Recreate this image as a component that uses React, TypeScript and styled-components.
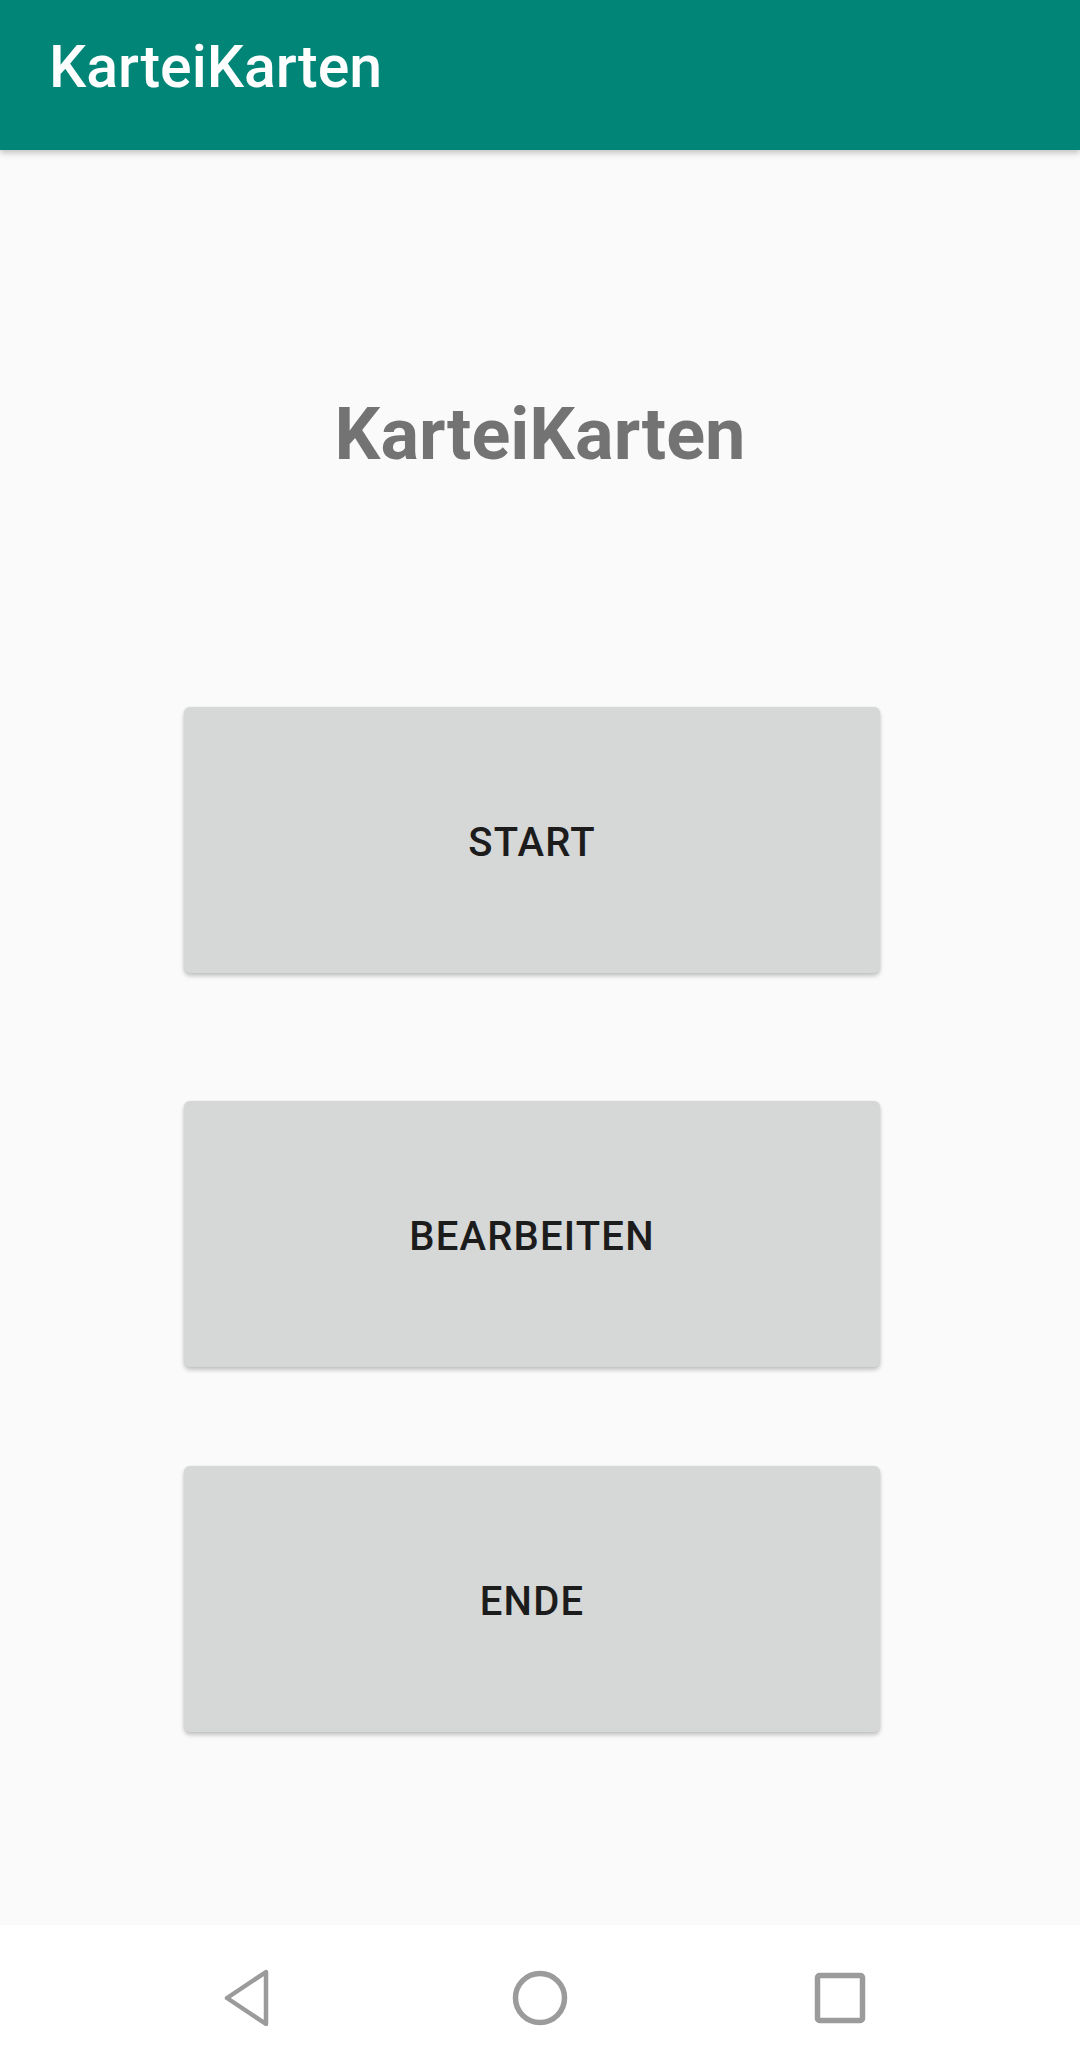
import React from "react";
import styled, { createGlobalStyle } from "styled-components";

const GlobalStyle = createGlobalStyle`
  html, body {
    margin: 0;
    padding: 0;
    background: #fafafa;
  }
  body {
    font-family: Roboto, "Noto Sans", "Liberation Sans", sans-serif;
  }
  * { box-sizing: border-box; }
`;

const Screen = styled.div`
  width: 1080px;
  height: 2070px;
  display: flex;
  flex-direction: column;
  background: #fafafa;
  overflow: hidden;
`;

const Toolbar = styled.header`
  position: relative;
  z-index: 2;
  height: 150px;
  flex: none;
  background: #008577;
  display: flex;
  align-items: center;
  padding-left: 49px;
  padding-bottom: 17px;
  box-shadow: 0 3px 6px rgba(0, 0, 0, 0.22);
`;

const ToolbarTitle = styled.h1`
  margin: 0;
  font-family: Roboto, sans-serif;
  font-weight: 500;
  font-size: 59px;
  line-height: 1;
  color: #ffffff;
  letter-spacing: 0;
`;

const Main = styled.main`
  flex: 1;
  display: flex;
  flex-direction: column;
  background: #fafafa;
`;

const Heading = styled.h2`
  margin: 249px 0 0 0;
  text-align: center;
  font-family: Roboto, sans-serif;
  font-weight: 700;
  font-size: 72px;
  line-height: 72px;
  color: #737373;
`;

const ButtonColumn = styled.div`
  display: flex;
  flex-direction: column;
  padding-left: 184px;
`;

const MenuButton = styled.button<{ $gap: number }>`
  margin-top: ${(p) => p.$gap}px;
  width: 696px;
  height: 266px;
  border: none;
  border-radius: 6px;
  background: #d6d7d7;
  box-shadow: 0 3px 4px rgba(0, 0, 0, 0.22), 0 0 2px rgba(0, 0, 0, 0.08);
  display: flex;
  align-items: center;
  justify-content: center;
  font-family: Roboto, sans-serif;
  font-weight: 500;
  font-size: 40px;
  letter-spacing: 0.03em;
  text-transform: uppercase;
  color: #1c1c1c;
  padding: 4px 0 0 0;
`;

const NavBar = styled.nav`
  height: 145px;
  flex: none;
  background: #ffffff;
  display: flex;
  align-items: center;
  justify-content: space-between;
  padding: 0 210px 0 216px;
`;

const NavIcon = styled.svg<{ $nudge?: number }>`
  width: 60px;
  height: 60px;
  display: block;
  margin-right: ${(p) => p.$nudge ?? 0}px;
`;

export default function App() {
  return (
    <>
      <GlobalStyle />
      <Screen>
        <Toolbar>
          <ToolbarTitle>KarteiKarten</ToolbarTitle>
        </Toolbar>
        <Main>
          <Heading>KarteiKarten</Heading>
          <ButtonColumn>
            <MenuButton $gap={236}>Start</MenuButton>
            <MenuButton $gap={128}>Bearbeiten</MenuButton>
            <MenuButton $gap={99}>Ende</MenuButton>
          </ButtonColumn>
        </Main>
        <NavBar>
          <NavIcon viewBox="0 0 60 60">
            <path
              d="M50 4 L50 56 L11 30 Z"
              fill="none"
              stroke="#9b9b9b"
              strokeWidth="4.5"
              strokeLinejoin="round"
            />
          </NavIcon>
          <NavIcon viewBox="0 0 60 60" $nudge={6}>
            <circle cx="30" cy="30" r="24.5" fill="none" stroke="#9b9b9b" strokeWidth="5.5" />
          </NavIcon>
          <NavIcon viewBox="0 0 60 60">
            <rect x="7.5" y="7.5" width="45" height="45" rx="2" fill="none" stroke="#9b9b9b" strokeWidth="5.5" />
          </NavIcon>
        </NavBar>
      </Screen>
    </>
  );
}
